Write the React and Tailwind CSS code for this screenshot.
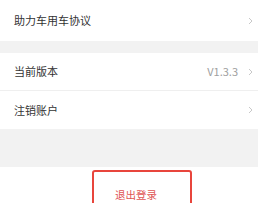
import React from 'react';

const Chevron = () => (
    <svg width="5" height="8" viewBox="0 0 5 8" className="shrink-0">
        <path d="M1 1l3 3-3 3" fill="none" stroke="#c8c8c8" strokeWidth="1" />
    </svg>
);

const Row = ({ label, value, border }) => (
    <div className={`flex items-center h-full bg-white pl-[14px] pr-[5px] ${border ? 'border-b border-[#efefef]' : ''}`}>
        <span className="flex-1 text-[11px] text-[#333]">{label}</span>
        {value && <span className="text-[11px] text-[#a0a0a0] mr-[10px]">{value}</span>}
        <Chevron />
    </div>
);

export default function App() {
    return (
        <div className="w-[258px] h-[203px] overflow-hidden bg-[#f2f2f2] font-['Noto_Sans_CJK_SC',_sans-serif] flex flex-col">
            <div className="h-[41px]">
                <Row label="助力车用车协议" />
            </div>
            <div className="h-[12px]" />
            <div className="h-[38px]">
                <Row label="当前版本" value="V1.3.3" border />
            </div>
            <div className="h-[38px]">
                <Row label="注销账户" />
            </div>
            <div className="h-[38px]" />
            <div className="flex-1 bg-white relative">
                <div className="absolute left-[92px] top-[3px] w-[100px] h-[50px] border-2 border-[#e8453c] rounded-[3px] pl-[21px] pt-[18px]">
                    <span className="block text-[10.5px] text-[#e05555] leading-none">退出登录</span>
                </div>
            </div>
        </div>
    );
}
